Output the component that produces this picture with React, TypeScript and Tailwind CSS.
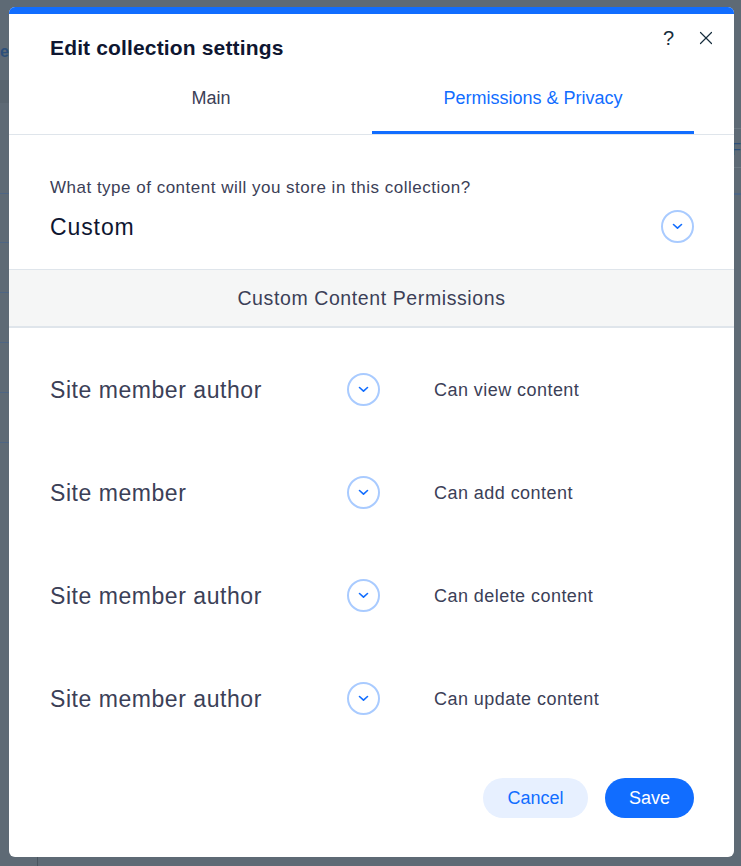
import { X } from 'lucide-react';

const ROWS = [
  { role: 'Site member author', action: 'Can view content' },
  { role: 'Site member', action: 'Can add content' },
  { role: 'Site member author', action: 'Can delete content' },
  { role: 'Site member author', action: 'Can update content' },
];

function DropdownCircle() {
  return (
    <div className="flex h-[33px] w-[33px] shrink-0 items-center justify-center rounded-full border-2 border-[#a9cbff] bg-white">
      <svg width="11" height="7" viewBox="0 0 11 7" fill="none">
        <path d="M1.5 1.5 L5.5 5.2 L9.5 1.5" stroke="#116dff" strokeWidth="1.6" strokeLinecap="round" strokeLinejoin="round" />
      </svg>
    </div>
  );
}

export default function App() {
  return (
    <div
      className="relative h-[866px] w-[741px] overflow-hidden bg-[#5e6a75] pl-[9px] pt-[7px]"
      style={{ fontFamily: '"Liberation Sans", Arial, sans-serif' }}
    >
      {/* faded page behind the overlay */}
      <div className="absolute left-0 top-[40px] text-[16px] font-bold text-[#2c4f7a]">ev</div>
      <div className="absolute left-0 top-[80px] h-[23px] w-[10px] bg-[#59656f]" />
      <div className="absolute left-0 top-[193px] h-px w-[10px] bg-[#4d6584]" />
      <div className="absolute left-0 top-[242px] h-px w-[10px] bg-[#4d6584]" />
      <div className="absolute left-0 top-[292px] h-px w-[10px] bg-[#4d6584]" />
      <div className="absolute left-0 top-[342px] h-px w-[10px] bg-[#4d6584]" />
      <div className="absolute left-0 top-[392px] h-px w-[10px] bg-[#4d6584]" />
      <div className="absolute left-0 top-[442px] h-px w-[10px] bg-[#4d6584]" />
      <div className="absolute right-0 top-[128px] h-px w-[7px] bg-[#6c7882]" />
      <div className="absolute right-0 top-[138px] text-[16px] text-[#2c4f7a]">F</div>
      <div className="absolute right-0 top-[167px] h-px w-[7px] bg-[#6c7882]" />
      <div className="absolute right-0 top-[193px] h-[2px] w-[7px] bg-[#4d6584]" />
      <div className="absolute left-[37px] top-[857px] h-[9px] w-px bg-[#4a555f]" />

      {/* modal */}
      <div className="relative flex h-[850px] w-[725px] flex-col overflow-hidden rounded-[6px] bg-white">
        <div className="h-[7px] shrink-0 bg-[#116dff]" />

        <div className="relative px-[41px] pt-[22px]">
          <h1 className="text-[21px] font-bold leading-[24px] tracking-[0.15px] text-[#0e1631]">Edit collection settings</h1>
          <div className="absolute right-[17px] top-[12px] flex items-center gap-[21px] text-[#162d3d]">
            <span className="text-[20px] leading-[24px]">?</span>
            <X size={22} strokeWidth={1.3} />
          </div>
        </div>

        {/* tabs */}
        <div className="border-b border-[#dfe5eb] pl-[41px] pr-[40px]">
          <div className="flex">
            <div className="flex-1 border-b-[3px] border-transparent pb-[22px] pt-[27px] text-center text-[18px] leading-[22px] text-[#3b4057]">
              Main
            </div>
            <div className="flex-1 border-b-[3px] border-[#116dff] pb-[22px] pt-[27px] text-center text-[18px] leading-[22px] text-[#116dff]">
              Permissions &amp; Privacy
            </div>
          </div>
        </div>

        {/* content type */}
        <div className="border-b border-[#dfe5eb] pb-[26px] pl-[41px] pr-[40px] pt-[43px]">
          <p className="text-[17px] leading-[20px] tracking-[0.5px] text-[#3b4057]">
            What type of content will you store in this collection?
          </p>
          <div className="mt-[12px] flex items-center justify-between">
            <span className="text-[23px] leading-[28px] tracking-[0.9px] text-[#0e1631]">Custom</span>
            <DropdownCircle />
          </div>
        </div>

        <div className="border-b-2 border-[#dfe5eb] bg-[#f5f6f6] py-[17px] text-center text-[19.5px] leading-[22px] tracking-[0.6px] text-[#3b4057]">
          Custom Content Permissions
        </div>

        {/* permission rows */}
        <div className="pt-[10px]">
          {ROWS.map((r, i) => (
            <div key={i} className="flex h-[103px] items-center pl-[41px]">
              <span className="w-[297px] text-[23px] leading-[28px] tracking-[0.55px] text-[#3b4057]">{r.role}</span>
              <DropdownCircle />
              <span className="ml-[54px] text-[18px] leading-[22px] tracking-[0.45px] text-[#3b4057]">{r.action}</span>
            </div>
          ))}
        </div>

        {/* footer */}
        <div className="mt-auto flex justify-end gap-[17px] pb-[39px] pr-[40px]">
          <button className="h-[40px] w-[105px] rounded-full bg-[#e7f0ff] text-[18px] text-[#116dff]">Cancel</button>
          <button className="h-[40px] w-[89px] rounded-full bg-[#116dff] text-[18px] text-white">Save</button>
        </div>
      </div>
    </div>
  );
}
